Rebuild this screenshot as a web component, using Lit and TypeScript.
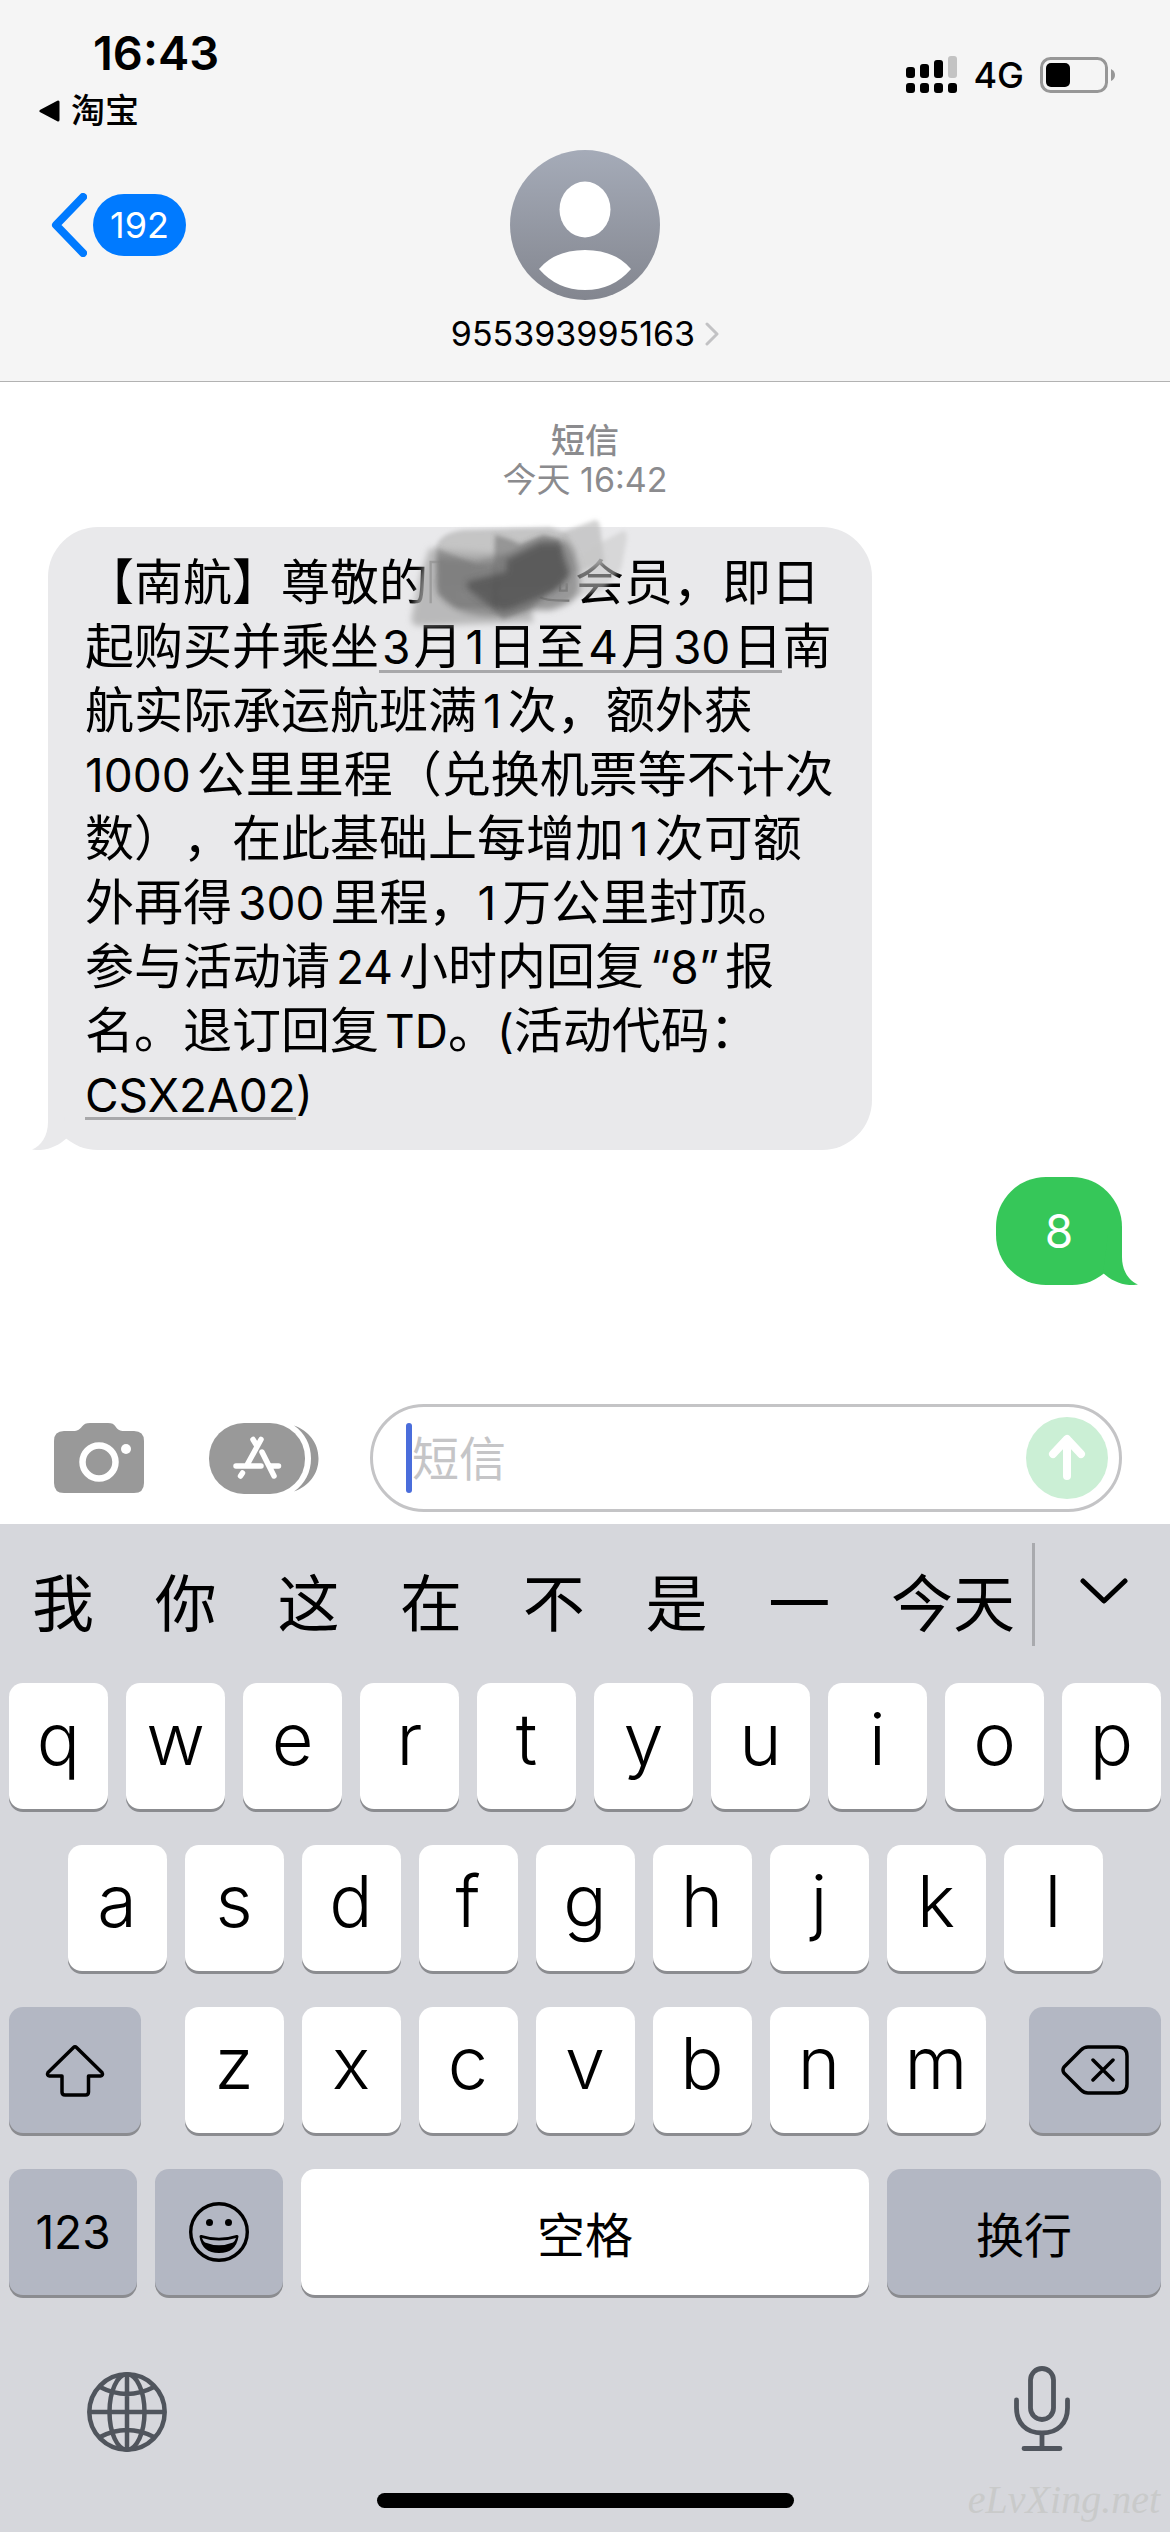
import { LitElement, html, css, svg } from "lit";
import { customElement, property } from "lit/decorators.js";

const CANDIDATES = ["我", "你", "这", "在", "不", "是", "一", "今天"];
const ROW_ONE = [..."qwertyuiop"];
const ROW_TWO = [..."asdfghjkl"];
const ROW_THREE = [..."zxcvbnm"];

const base = css`
  * {
    box-sizing: border-box;
  }
  button,
  input {
    font: inherit;
    color: inherit;
    margin: 0;
    padding: 0;
    border: 0;
    background: none;
    outline: none;
  }
  a {
    color: inherit;
    text-decoration: none;
  }
  svg {
    display: block;
    flex: none;
  }
`;

@customElement("chat-header")
export class ChatHeader extends LitElement {
  static styles = [
    base,
    css`
      :host {
        display: block;
        background: #f5f5f5;
        border-bottom: 1px solid #b2b2b2;
      }
      .status {
        display: flex;
        justify-content: space-between;
        align-items: flex-start;
        height: 150px;
        padding: 25px 54px 0 39px;
      }
      .left {
        display: flex;
        flex-direction: column;
        align-items: flex-start;
        gap: 10px;
      }
      .clock {
        margin-left: 54px;
        font-size: 47px;
        line-height: 56px;
        font-weight: 600;
      }
      .return {
        display: flex;
        align-items: center;
        gap: 10px;
        font-size: 34px;
        line-height: 40px;
        font-weight: 500;
      }
      .right {
        display: flex;
        align-items: center;
        gap: 16px;
        padding-top: 28px;
        font-size: 36px;
        line-height: 44px;
        font-weight: 450;
      }
      .nav {
        display: grid;
        grid-template-columns: 1fr auto 1fr;
        align-items: start;
        padding-bottom: 27px;
      }
      .back {
        display: flex;
        align-items: center;
        gap: 6px;
        justify-self: start;
        margin: 43px 0 0 51px;
      }
      .badge {
        min-width: 92px;
        padding: 0 17px;
        border-radius: 31px;
        background: #007aff;
        color: #fff;
        font-size: 36px;
        line-height: 62px;
      }
      .contact {
        display: flex;
        flex-direction: column;
        align-items: center;
        gap: 14px;
      }
      .name {
        display: flex;
        align-items: center;
        gap: 10px;
        font-size: 34px;
        line-height: 40px;
      }
    `,
  ];

  render() {
    return html`
      <div class="status">
        <div class="left">
          <time class="clock">16:43</time>
          <a class="return" href="#taobao">
            <svg width="22" height="22" viewBox="0 0 22 22">
              <path d="M2 11 19 2V20Z" stroke="#000" stroke-width="3" stroke-linejoin="round" />
            </svg>
            淘宝
          </a>
        </div>
        <div class="right">
          <svg width="51" height="38" viewBox="0 0 51 38">
            <rect x="0" y="11" width="9" height="11" rx="3" />
            <rect x="14" y="8" width="9" height="14" rx="3" />
            <rect x="28" y="4" width="9" height="18" rx="3" />
            <rect x="42" y="0" width="9" height="22" rx="3" fill="#c3c3c3" />
            <rect x="0" y="27" width="9" height="10" rx="3" />
            <rect x="14" y="27" width="9" height="10" rx="3" />
            <rect x="28" y="27" width="9" height="10" rx="3" />
            <rect x="42" y="27" width="9" height="10" rx="3" />
          </svg>
          <span>4G</span>
          <svg width="76" height="36" viewBox="0 0 76 36">
            <rect x="1.5" y="1.5" width="65" height="33" rx="9" fill="none" stroke="#979797" stroke-width="3" />
            <rect x="6" y="6" width="24" height="24" rx="5" />
            <path d="M71 12Q75 14 75 18T71 24Z" fill="#979797" />
          </svg>
        </div>
      </div>
      <div class="nav">
        <button class="back" aria-label="返回">
          <svg width="36" height="64" viewBox="0 0 36 64">
            <path d="M32 4 5 32 32 60" fill="none" stroke="#007aff" stroke-width="8" stroke-linecap="round" stroke-linejoin="round" />
          </svg>
          <span class="badge">192</span>
        </button>
        <button class="contact">
          <svg width="150" height="150" viewBox="0 0 150 150">
            <defs>
              <linearGradient id="g" x1="0" y1="0" x2="0" y2="1">
                <stop offset="0" stop-color="#a5abb8" />
                <stop offset="1" stop-color="#83868f" />
              </linearGradient>
            </defs>
            <circle cx="75" cy="75" r="75" fill="url(#g)" />
            <ellipse cx="75" cy="59.500" rx="25.500" ry="28" fill="#fff" />
            <path d="M29 119Q45 100 75 100T121 119Q103 140 75 140T29 119Z" fill="#fff" />
          </svg>
          <span class="name">
            955393995163
            <svg width="14" height="24" viewBox="0 0 14 24">
              <path d="M2 2 12 12 2 22" fill="none" stroke="#c2c2c4" stroke-width="3" stroke-linecap="round" stroke-linejoin="round" />
            </svg>
          </span>
        </button>
      </div>
    `;
  }
}

const tail = (fill: string) => svg`<path d="M18 0H32V22C32 36 39 46 48 49.500C34 52 22 46 13 38Z" fill=${fill} />`;

@customElement("chat-thread")
export class ChatThread extends LitElement {
  static styles = [
    base,
    css`
      :host {
        display: flex;
        flex-direction: column;
        align-items: flex-start;
        padding: 39px 48px 0;
      }
      .stamp {
        align-self: center;
        margin: 0 0 28px;
        text-align: center;
        color: #8b8b8e;
        font-size: 34px;
        line-height: 39px;
      }
      .kind {
        font-weight: 500;
      }
      .stamp span {
        display: block;
      }
      .bubble {
        position: relative;
        margin: 0;
        border-radius: 50px;
        font-size: 49px;
        line-height: 64px;
        text-spacing-trim: space-all;
      }
      .received {
        min-width: 824px;
        padding: 24px 37px 23px;
        background: #e9e9eb;
      }
      .sent {
        align-self: flex-end;
        min-width: 126px;
        margin-top: 27px;
        padding: 22px 37px;
        background: #36c759;
        color: #fff;
        font-size: 46px;
        text-align: center;
      }
      .line {
        display: block;
        white-space: nowrap;
      }
      .n {
        margin: 0 6px;
        font-size: 46px;
      }
      .first {
        margin-left: 0;
      }
      .last {
        margin-right: 0;
      }
      .name {
        display: inline-block;
        width: 3em;
      }
      .detected {
        background: linear-gradient(#a8a8aa, #a8a8aa) 0 calc(100% - 3px) / 100% 3px no-repeat;
      }
      .detected .n {
        margin: 0 3px;
      }
      .tail {
        position: absolute;
        bottom: 0;
        right: -16px;
      }
      .received .tail {
        right: auto;
        left: -16px;
        transform: scaleX(-1);
      }
      .smudge {
        position: absolute;
        left: 352px;
        top: -27px;
      }
    `,
  ];

  render() {
    return html`
      <p class="stamp"><span class="kind">短信</span><span>今天 16:42</span></p>
      <p class="bubble received">
        <span class="line">【南航】尊敬的<span class="name"></span>会员，即日</span>
        <span class="line">起购买并乘坐<a class="detected" href="#calendar"><span class="n">3</span>月<span class="n">1</span>日至<span class="n">4</span>月<span class="n">30</span>日</a>南</span>
        <span class="line">航实际承运航班满<span class="n">1</span>次，额外获</span>
        <span class="line"><span class="n first">1000</span>公里里程（兑换机票等不计次</span>
        <span class="line">数），在此基础上每增加<span class="n">1</span>次可额</span>
        <span class="line">外再得<span class="n">300</span>里程，<span class="n first">1</span>万公里封顶。</span>
        <span class="line">参与活动请<span class="n">24</span>小时内回复<span class="n">“8”</span>报</span>
        <span class="line">名。退订回复<span class="n last">TD</span>。<span class="n first last">(</span>活动代码：</span>
        <span class="line"><span class="n first"><a class="detected" href="#code">CSX2A02</a>)</span></span>
        <svg class="tail" width="48" height="50" viewBox="0 0 48 50">${tail("#e9e9eb")}</svg>
        <svg class="smudge" width="240" height="140" viewBox="0 0 720 420">
          <defs>
            <filter id="soft" x="-10%" y="-10%" width="120%" height="120%"><feGaussianBlur stdDeviation="6" /></filter>
            <filter id="softer" x="-10%" y="-10%" width="120%" height="120%"><feGaussianBlur stdDeviation="9" /></filter>
          </defs>
          <path d="M92 310V186H130" fill="none" stroke="#777" stroke-width="7" />
          <path d="M420 292Q440 303 508 302M480 240V272H500V250" fill="none" stroke="#666" stroke-width="7" />
          <g filter="url(#soft)">
            <path d="M480 100 585 60Q597 60 600 80L614 190 520 220Z" fill="#b4b4b4" opacity=".6" />
            <path d="M540 160 670 92Q684 95 680 120L664 205 610 270 530 290Z" fill="#c8c8c8" opacity=".55" />
            <path d="M106 150Q112 100 190 90L450 82 500 100 530 150 500 260 120 270Z" fill="#b8b8b8" opacity=".75" />
          </g>
          <g filter="url(#softer)">
            <path d="M88 145 290 160 180 290 390 300 400 366 60 378Q34 380 34 355L60 230Z" fill="#a9a9a9" opacity=".75" />
            <path d="M400 330Q300 365 200 340 110 310 108 250L110 170 230 180 330 160 430 115 500 125Q545 180 538 270 530 310 450 330Z" fill="#858585" opacity=".8" />
          </g>
          <g filter="url(#soft)">
            <path d="M112 146 230 195 290 190V322L170 322 114 280Z" fill="#747474" opacity=".5" />
            <path d="M285 104 330 118 360 132 430 105 478 118 484 180 500 230 400 320 310 358 278 330Z" fill="#707070" opacity=".55" />
          </g>
          <g filter="url(#softer)">
            <path d="M200 245 320 215 320 180 420 130 480 130 510 220 470 270 400 300 320 330 280 325 205 270Z" fill="#4a4a4a" opacity=".65" />
          </g>
        </svg>
      </p>
      <p class="bubble sent">
        8
        <svg class="tail" width="48" height="50" viewBox="0 0 48 50">${tail("#36c759")}</svg>
      </p>
    `;
  }
}

@customElement("compose-bar")
export class ComposeBar extends LitElement {
  static styles = [
    base,
    css`
      :host {
        display: flex;
        align-items: center;
        padding: 0 48px 12px 54px;
      }
      .apps {
        margin: 0 51px 0 65px;
      }
      .field {
        flex: 1;
        display: flex;
        align-items: center;
        min-width: 0;
        height: 108px;
        padding: 0 11px 0 33px;
        border: 3px solid #c4c4c6;
        border-radius: 54px;
      }
      .caret {
        width: 6px;
        height: 70px;
        border-radius: 3px;
        background: #4a6ddb;
      }
      .text {
        flex: 1;
        min-width: 0;
        height: 70px;
        font-size: 47px;
      }
      .text::placeholder {
        color: #c5c5c7;
        opacity: 1;
      }
    `,
  ];

  render() {
    return html`
      <button aria-label="相机">
        <svg width="90" height="70" viewBox="0 0 90 70">
          <path d="M10 8H19C24 8 26 6 28 3.500C30 1 32 0 36 0H54C58 0 60 1 61.500 3.500C64 7 66 8 70 8H80Q90 8 90 18V60Q90 70 80 70H10Q0 70 0 60V18Q0 8 10 8Z" fill="#999" />
          <circle cx="45" cy="39" r="16.500" fill="none" stroke="#fff" stroke-width="6.500" />
          <circle cx="72" cy="26" r="5" fill="#fff" />
        </svg>
      </button>
      <button class="apps" aria-label="应用">
        <svg width="110" height="71" viewBox="0 0 110 71">
          <rect width="96" height="71" rx="35" fill="#999" />
          <path d="M85 2.500C100 8 109.500 20 109.500 35.500S100 63 85 68.500C96 61 102 49 102 35.500S96 10 85 2.500Z" fill="#999" />
          <path d="M52 16.500 38 42M44 16.500 48 23M53 29 65 53M27 43H52M62 43H69.500M33.500 50 31.500 53" fill="none" stroke="#fff" stroke-width="5.500" stroke-linecap="round" />
        </svg>
      </button>
      <div class="field">
        <span class="caret"></span>
        <input class="text" type="text" placeholder="短信" aria-label="短信" />
        <button aria-label="发送">
          <svg width="82" height="82" viewBox="0 0 82 82">
            <circle cx="41" cy="41" r="41" fill="#cbefd5" />
            <path d="M41 23V59M27 37 41 22 55 37" fill="none" stroke="#fff" stroke-width="8" stroke-linecap="round" stroke-linejoin="round" />
          </svg>
        </button>
      </div>
    `;
  }
}

@customElement("soft-keyboard")
export class SoftKeyboard extends LitElement {
  @property({ attribute: false }) candidates: string[] = CANDIDATES;

  static styles = [
    base,
    css`
      :host {
        display: block;
        position: relative;
        background: #d6d7dc;
      }
      .candidates {
        display: flex;
        align-items: flex-start;
        height: 159px;
        padding: 19px 42px 0 32px;
      }
      .words {
        flex: 1;
        display: flex;
        justify-content: space-between;
        margin-top: 22px;
        font-size: 62px;
        line-height: 80px;
      }
      .expand {
        display: flex;
        margin-left: 17px;
        padding: 35px 0 41px 45px;
        border-left: 3px solid #a9aaae;
      }
      .rows {
        display: flex;
        flex-direction: column;
        gap: 36px;
        padding: 0 9px;
      }
      .row {
        display: flex;
        justify-content: center;
        gap: 18px;
      }
      .key {
        display: flex;
        align-items: center;
        justify-content: center;
        flex: 0 0 calc((100% - 162px) / 10);
        height: 126px;
        padding-bottom: 16px;
        border-radius: 14px;
        background: #fff;
        box-shadow: 0 3px 0 #8b8c90;
        font-size: 72px;
        font-weight: 350;
      }
      .gray {
        background: #b3b7c3;
      }
      .side {
        flex: 0 0 132px;
        padding: 0;
      }
      .letters {
        flex: 1;
        display: flex;
        justify-content: center;
        gap: 18px;
      }
      .letters .key {
        flex: 0 1 99px;
      }
      .label {
        flex: 0 0 128px;
        padding: 0;
        font-size: 46px;
        font-weight: 400;
      }
      .space {
        flex: 1;
        font-size: 48px;
      }
      .enter {
        flex: 0 0 274px;
        font-size: 48px;
      }
      .tools {
        display: flex;
        justify-content: space-between;
        align-items: flex-end;
        padding: 71px 100px 0 87px;
      }
      .home {
        width: 417px;
        height: 15px;
        margin: 41px auto 24px;
        border-radius: 8px;
        background: #000;
      }
      .mark {
        position: absolute;
        right: 10px;
        bottom: 10px;
        color: #c9caca;
        font: italic 40px/44px "Liberation Serif", serif;
      }
    `,
  ];

  private keys(letters: string[]) {
    return letters.map((l) => html`<button class="key">${l}</button>`);
  }

  render() {
    return html`
      <div class="candidates">
        <div class="words">${this.candidates.map((w) => html`<button>${w}</button>`)}</div>
        <button class="expand" aria-label="展开">
          <svg width="48" height="27" viewBox="0 0 48 27">
            <path d="M3 3 24 23 45 3" fill="none" stroke="#000" stroke-width="5" stroke-linecap="round" stroke-linejoin="round" />
          </svg>
        </button>
      </div>
      <div class="rows">
        <div class="row">${this.keys(ROW_ONE)}</div>
        <div class="row">${this.keys(ROW_TWO)}</div>
        <div class="row">
          <button class="key gray side" aria-label="大写">
            <svg width="60" height="53" viewBox="0 0 60 53">
              <path d="M28.500 3.500Q30 2 31.500 3.500L57 28.500Q58.500 31.500 55.500 32H43.500V48Q43.500 51 40.500 51H20Q17 51 17 48V32H4.500Q1.500 31.500 3 28.500Z" fill="none" stroke="#000" stroke-width="3.500" stroke-linejoin="round" />
            </svg>
          </button>
          <div class="letters">${this.keys(ROW_THREE)}</div>
          <button class="key gray side" aria-label="删除">
            <svg width="68" height="50" viewBox="0 0 68 50">
              <path d="M27 2H57Q66 2 66 11V39Q66 48 57 48H27Q23 48 20 45L3 28Q1 25 3 22L20 5Q23 2 27 2ZM32 15 52 35M52 15 32 35" fill="none" stroke="#000" stroke-width="3.500" stroke-linecap="round" stroke-linejoin="round" />
            </svg>
          </button>
        </div>
        <div class="row">
          <button class="key gray label">123</button>
          <button class="key gray label" aria-label="表情">
            <svg width="60" height="60" viewBox="0 0 60 60">
              <circle cx="30" cy="30" r="28.300" fill="none" stroke="#000" stroke-width="3.400" />
              <circle cx="20.500" cy="20.500" r="3.500" />
              <circle cx="39.500" cy="20.500" r="3.500" />
              <path d="M10.500 34.500Q10.500 32.500 12.500 33Q30 38.500 47.500 33Q49.500 32.500 49.500 34.500Q47 51 30 51T10.500 34.500Z" />
              <path d="M13 36Q30 41 47 36Q46 39 44 40.500Q30 46 16 40.500Q14 39 13 36Z" fill="#b3b7c3" />
            </svg>
          </button>
          <button class="key label space">空格</button>
          <button class="key gray label enter">换行</button>
        </div>
      </div>
      <div class="tools">
        <button aria-label="切换键盘">
          <svg width="80" height="80" viewBox="0 0 80 80" fill="none" stroke="#50555d" stroke-width="4.500">
            <circle cx="40" cy="40" r="37.700" />
            <ellipse cx="40" cy="40" rx="17.500" ry="37.700" />
            <path d="M40 2V78M2 40H78M13 15Q40 29 67 15M13 65Q40 51 67 65" />
          </svg>
        </button>
        <button aria-label="听写">
          <svg width="56" height="86" viewBox="0 0 56 86" fill="none" stroke="#50555d" stroke-width="4.800" stroke-linecap="round">
            <rect x="16.500" y="2.500" width="23" height="51" rx="11.500" />
            <path d="M2.500 34V42C2.500 57 12 67 28 67S53.500 57 53.500 42V34M28 67V82M10 82.500H46" />
          </svg>
        </button>
      </div>
      <div class="home"></div>
      <span class="mark">eLvXing.net</span>
    `;
  }
}

@customElement("app-root")
export class AppRoot extends LitElement {
  static styles = css`
    :host {
      display: flex;
      flex-direction: column;
      min-height: 100vh;
      background: #fff;
      color: #000;
      font-family: Inter, "Noto Sans CJK SC", sans-serif;
    }
    chat-thread {
      flex: 1;
    }
  `;

  render() {
    return html`
      <chat-header></chat-header>
      <chat-thread></chat-thread>
      <compose-bar></compose-bar>
      <soft-keyboard></soft-keyboard>
    `;
  }
}
